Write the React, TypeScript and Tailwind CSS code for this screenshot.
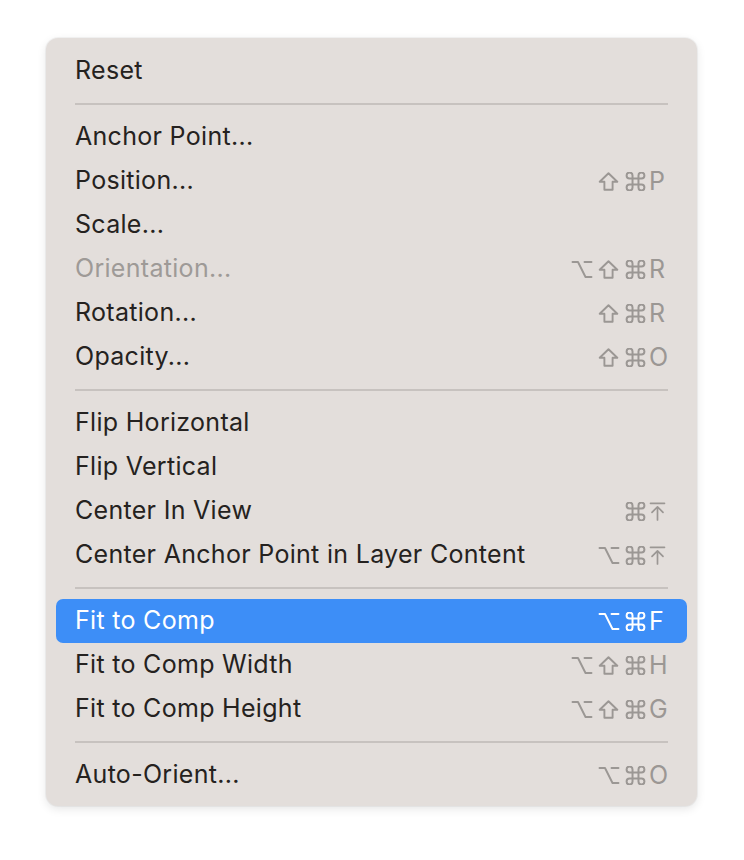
import React from 'react'

type Key = 'opt' | 'shift' | 'cmd' | 'top' | string

interface MenuItem {
  label?: string
  keys?: Key[]
  disabled?: boolean
  active?: boolean
  separator?: boolean
}

const items: MenuItem[] = [
  { label: 'Reset' },
  { separator: true },
  { label: 'Anchor Point...' },
  { label: 'Position...', keys: ['shift', 'cmd', 'P'] },
  { label: 'Scale...' },
  { label: 'Orientation...', keys: ['opt', 'shift', 'cmd', 'R'], disabled: true },
  { label: 'Rotation...', keys: ['shift', 'cmd', 'R'] },
  { label: 'Opacity...', keys: ['shift', 'cmd', 'O'] },
  { separator: true },
  { label: 'Flip Horizontal' },
  { label: 'Flip Vertical' },
  { label: 'Center In View', keys: ['cmd', 'top'] },
  { label: 'Center Anchor Point in Layer Content', keys: ['opt', 'cmd', 'top'] },
  { separator: true },
  { label: 'Fit to Comp', keys: ['opt', 'cmd', 'F'], active: true },
  { label: 'Fit to Comp Width', keys: ['opt', 'shift', 'cmd', 'H'] },
  { label: 'Fit to Comp Height', keys: ['opt', 'shift', 'cmd', 'G'] },
  { separator: true },
  { label: 'Auto-Orient...', keys: ['opt', 'cmd', 'O'] },
]

function Glyph({ k }: { k: Key }) {
  const common = {
    fill: 'none',
    stroke: 'currentColor',
    strokeWidth: 1.9,
    strokeLinecap: 'round' as const,
    strokeLinejoin: 'round' as const,
  }
  if (k === 'opt') {
    return (
      <svg width="22" height="19" viewBox="0 0 22 19" {...common}>
        <path d="M1.5 2H7L14.5 17H20.5M13.5 2H20.5" />
      </svg>
    )
  }
  if (k === 'shift') {
    return (
      <svg width="21" height="19" viewBox="0 0 21 19" {...common}>
        <path d="M10.5 1.2L19.3 9.8H14.6V17.8H6.4V9.8H1.7Z" />
      </svg>
    )
  }
  if (k === 'cmd') {
    return (
      <svg width="21" height="19" viewBox="2.4 2.4 19.2 19.2" {...common} strokeWidth={2}>
        <path d="M15 6v12a3 3 0 1 0 3-3H6a3 3 0 1 0 3 3V6a3 3 0 1 0-3 3h12a3 3 0 1 0-3-3" />
      </svg>
    )
  }
  if (k === 'top') {
    return (
      <svg width="17" height="19" viewBox="0 0 17 19" {...common} strokeWidth={1.7}>
        <path d="M1.5 1.3H15.5M8.5 4.8V18M3 10.3L8.5 4.8L14 10.3" />
      </svg>
    )
  }
  return <span className="leading-none">{k}</span>
}

function Shortcut({ keys }: { keys: Key[] }) {
  const mods = keys.slice(0, -1)
  const last = keys[keys.length - 1]
  return (
    <div className="flex items-center">
      {mods.map((k, i) => (
        <span key={i} className="w-[27px] flex justify-center">
          <Glyph k={k} />
        </span>
      ))}
      <span className="w-[19px] flex justify-start">
        <Glyph k={last} />
      </span>
    </div>
  )
}

export default function App() {
  return (
    <div className="w-full min-h-[860px] bg-white pt-[38px] pl-[46px]" style={{ fontFamily: 'Inter, "Liberation Sans", sans-serif' }}>
      <div className="w-[651px] bg-[#e3dedb] rounded-[12px] pt-[11px] pb-[9px] shadow-[0_3px_10px_rgba(0,0,0,0.10),0_0_0_1px_rgba(0,0,0,0.04)]">
        {items.map((item, i) =>
          item.separator ? (
            <div key={i} className="h-[22px] flex items-center px-[29px]">
              <div className="h-[2px] w-full bg-[#c7c2bf]" />
            </div>
          ) : (
            <div
              key={i}
              className={`mx-[10px] h-[44px] px-[19px] rounded-[7px] flex items-center justify-between text-[25px] tracking-[0.3px] ${
                item.active ? 'bg-[#3d8ef7] text-white' : item.disabled ? 'text-[#9e9a97]' : 'text-[#252220]'
              }`}
            >
              <span>{item.label}</span>
              {item.keys && (
                <div className={item.active ? 'text-white' : 'text-[#9b9794]'}>
                  <Shortcut keys={item.keys} />
                </div>
              )}
            </div>
          )
        )}
      </div>
    </div>
  )
}
